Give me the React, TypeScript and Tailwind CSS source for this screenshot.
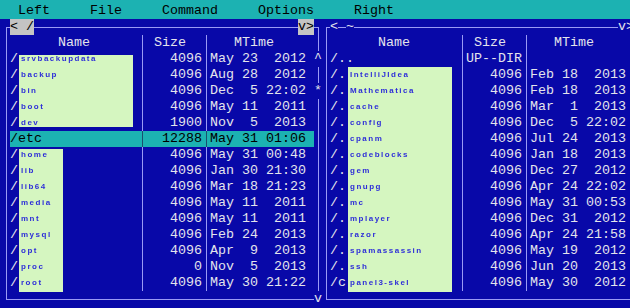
const LINE = "border-[#9a9af5]";

type Row = { p: string; s: string; d: string; hi?: boolean };

const leftRows: Row[] = [
  { p: "/", s: "4096", d: "May 23  2012" },
  { p: "/", s: "4096", d: "Aug 28  2012" },
  { p: "/", s: "4096", d: "Dec  5 22:02" },
  { p: "/", s: "4096", d: "May 11  2011" },
  { p: "/", s: "1900", d: "Nov  5  2013" },
  { p: "/etc", s: "12288", d: "May 31 01:06", hi: true },
  { p: "/", s: "4096", d: "May 31 00:48" },
  { p: "/", s: "4096", d: "Jan 30 21:30" },
  { p: "/", s: "4096", d: "Mar 18 21:23" },
  { p: "/", s: "4096", d: "May 11  2011" },
  { p: "/", s: "4096", d: "May 11  2011" },
  { p: "/", s: "4096", d: "Feb 24  2013" },
  { p: "/", s: "4096", d: "Apr  9  2013" },
  { p: "/", s: "0", d: "Nov  5  2013" },
  { p: "/", s: "4096", d: "May 30 21:22" },
];

const rightRows: Row[] = [
  { p: "/..", s: "UP--DIR", d: "" },
  { p: "/.", s: "4096", d: "Feb 18  2013" },
  { p: "/.", s: "4096", d: "Feb 18  2013" },
  { p: "/.", s: "4096", d: "Mar  1  2013" },
  { p: "/.", s: "4096", d: "Dec  5 22:02" },
  { p: "/.", s: "4096", d: "Jul 24  2013" },
  { p: "/.", s: "4096", d: "Jan 18  2013" },
  { p: "/.", s: "4096", d: "Dec 27  2012" },
  { p: "/.", s: "4096", d: "Apr 24 22:02" },
  { p: "/.", s: "4096", d: "May 31 00:53" },
  { p: "/.", s: "4096", d: "Dec 31  2012" },
  { p: "/.", s: "4096", d: "Apr 24 21:58" },
  { p: "/.", s: "4096", d: "May 19  2012" },
  { p: "/.", s: "4096", d: "Jun 20  2013" },
  { p: "/c", s: "4096", d: "May 30  2012" },
];

// blurred names under the redaction boxes
const hiddenTop = ["srvbackupdata", "backup", "bin", "boot", "dev"];
const hiddenBottom = ["home", "lib", "lib64", "media", "mnt", "mysql", "opt", "proc", "root"];
const hiddenRight = [
  "IntelliJIdea", "Mathematica", "cache", "config", "cpanm", "codeblocks", "gem",
  "gnupg", "mc", "mplayer", "razor", "spamassassin", "ssh", "panel3-skel",
];

function VLine({ dark }: { dark?: boolean }) {
  return (
    <div className="w-2 h-4 shrink-0 pl-1">
      <div className={dark ? "h-full border-l border-[#1a4f70]" : "h-full border-l " + LINE} />
    </div>
  );
}

function HLine({ fixed }: { fixed?: boolean }) {
  return (
    <div className={fixed ? "w-2 h-4 pt-2 shrink-0" : "flex-1 h-4 pt-2"}>
      <div className={"border-t " + LINE} />
    </div>
  );
}

function Corner({ pos }: { pos: "tl" | "tr" | "bl" | "br" }) {
  if (pos === "tl")
    return (
      <div className="w-2 h-4 pt-2 pl-1 shrink-0">
        <div className={"h-full border-t border-l " + LINE} />
      </div>
    );
  if (pos === "tr")
    return (
      <div className="w-2 h-4 pt-2 pr-[3px] shrink-0">
        <div className={"h-full border-t border-r " + LINE} />
      </div>
    );
  if (pos === "bl")
    return (
      <div className="w-2 h-4 pl-1 shrink-0">
        <div className={"h-[9px] border-b border-l " + LINE} />
      </div>
    );
  return (
    <div className="w-2 h-4 pr-[3px] shrink-0">
      <div className={"h-[9px] border-b border-r " + LINE} />
    </div>
  );
}

function DataRow({ r, mark }: { r: Row; mark?: string }) {
  return (
    <div className="flex h-4">
      <VLine />
      <div className={r.hi ? "flex bg-[#1cb2b2] text-black" : "flex"}>
        <div className="w-32 whitespace-pre overflow-hidden">{r.p}</div>
        <VLine dark={r.hi} />
        <div className="w-14 text-right">{r.s}</div>
        <VLine dark={r.hi} />
        <div className="w-24 whitespace-pre">{r.d}</div>
        <div className="w-2" />
      </div>
      {mark ? <div className="w-2 shrink-0 text-center">{mark}</div> : <VLine />}
    </div>
  );
}

function Panel({ rows, active }: { rows: Row[]; active?: boolean }) {
  return (
    <div className="w-80 shrink-0 flex flex-col">
      <div className="flex h-4">
        <Corner pos="tl" />
        {active ? (
          <div className="w-6 bg-[#c4c4c4] text-black whitespace-pre">{"< /"}</div>
        ) : (
          <>
            <div className="w-2">&lt;</div>
            <HLine fixed />
            <div className="w-2">~</div>
          </>
        )}
        <HLine />
        <div className={active ? "w-4 bg-[#c4c4c4] text-black" : "w-4"}>v&gt;</div>
        <Corner pos="tr" />
      </div>
      <div className="flex h-4">
        <VLine />
        <div className="w-32 text-center">Name</div>
        <VLine />
        <div className="w-14 pl-2">Size</div>
        <VLine />
        <div className="w-24 pl-6">MTime</div>
        <div className="w-2" />
        <VLine />
      </div>
      {rows.map((r, i) => (
        <DataRow key={i} r={r} mark={active ? (i === 0 ? "^" : i === 2 ? "*" : undefined) : undefined} />
      ))}
      <div className="flex h-4">
        <Corner pos="bl" />
        <HLine />
        {active ? <div className="w-2 shrink-0 text-center">v</div> : <Corner pos="br" />}
      </div>
    </div>
  );
}

function Hidden({ names }: { names: string[] }) {
  return (
    <div className="blur-[0.6px]">
      {names.map((n, i) => (
        <div
          key={i}
          className="h-4 leading-4 text-[8px] font-bold tracking-[1.5px] text-[#2e2ed8] font-['Liberation_Sans',sans-serif] whitespace-pre"
        >
          {n}
        </div>
      ))}
    </div>
  );
}

export default function App() {
  return (
    <div className="relative w-[630px] h-[308px] overflow-hidden bg-[#0808a8] text-[#e4e4ec] font-['Liberation_Mono',monospace] text-[13.33px] leading-4">
      <div className="h-[19px] pt-[3px] pl-[2px] bg-[#1cb2b2] text-black whitespace-pre">
        {"  Left     File     Command     Options     Right"}
      </div>
      <div className="flex pl-[2px]">
        <Panel rows={leftRows} active />
        <Panel rows={rightRows} />
      </div>

      {/* redaction boxes laid over the file names */}
      <div className="absolute left-[19px] top-[55px] w-[114px] h-[72px] bg-[#d5f6c0] overflow-hidden pl-[2px]">
        <div className="-mt-1">
          <Hidden names={hiddenTop} />
        </div>
      </div>
      <div className="absolute left-[19px] top-[149px] w-[44px] h-[143px] bg-[#d5f6c0] overflow-hidden pl-[2px]">
        <div className="-mt-0.5">
          <Hidden names={hiddenBottom} />
        </div>
      </div>
      <div className="absolute left-[348px] top-[67px] w-[104px] h-[225px] bg-[#d5f6c0] overflow-hidden pl-[2px]">
        <Hidden names={hiddenRight} />
      </div>
    </div>
  );
}
